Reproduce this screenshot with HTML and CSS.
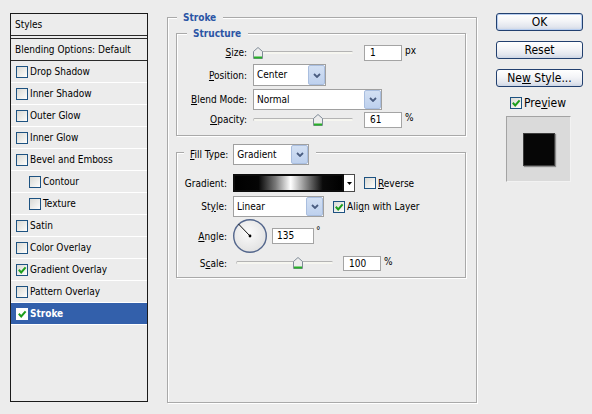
FILE: index.html
```html
<!DOCTYPE html>
<html lang="en">
<head>
<meta charset="utf-8">
<title>Layer Style</title>
<link rel="stylesheet" href="styles.css">
</head>
<body>
<div class="dialog">
  <div class="styles-list">
    <div class="list-head">Styles</div>
    <div class="list-blend">Blending Options: Default</div>
    <div class="list-item"><span class="cb"></span><span>Drop Shadow</span></div>
    <div class="list-item"><span class="cb"></span><span>Inner Shadow</span></div>
    <div class="list-item"><span class="cb"></span><span>Outer Glow</span></div>
    <div class="list-item"><span class="cb"></span><span>Inner Glow</span></div>
    <div class="list-item"><span class="cb"></span><span>Bevel and Emboss</span></div>
    <div class="list-item sub"><span class="cb"></span><span>Contour</span></div>
    <div class="list-item sub"><span class="cb"></span><span>Texture</span></div>
    <div class="list-item"><span class="cb"></span><span>Satin</span></div>
    <div class="list-item"><span class="cb"></span><span>Color Overlay</span></div>
    <div class="list-item"><span class="cb"><svg class="tick" viewBox="0 0 10 10" width="10" height="10"><path d="M1.8 4.8 L4.2 7.4 L8.6 2.4" fill="none" stroke="#1c9e1c" stroke-width="2"/></svg></span><span>Gradient Overlay</span></div>
    <div class="list-item"><span class="cb"></span><span>Pattern Overlay</span></div>
    <div class="list-item selected"><span class="cb"><svg class="tick" viewBox="0 0 10 10" width="10" height="10"><path d="M1.8 4.8 L4.2 7.4 L8.6 2.4" fill="none" stroke="#1c9e1c" stroke-width="2"/></svg></span><span>Stroke</span></div>
  </div>

  <fieldset class="group main">
    <legend>Stroke</legend>

    <fieldset class="group structure">
      <legend>Structure</legend>
      <div class="row r-size">
        <span class="lbl"><u>S</u>ize:</span>
        <div class="slider s-size">
          <div class="track"></div>
          <svg class="thumb" style="left:0px" viewBox="0 0 10 12" width="10" height="12"><path d="M0.5 4.5 L5 0.5 L9.5 4.5 V11.5 H0.5 Z" fill="#ededed" stroke="#7e8b97"/><rect x="1" y="9.5" width="8" height="2" fill="#27b027"/></svg>
        </div>
        <span class="num n-size">1</span><span class="unit">px</span>
      </div>
      <div class="row r-pos">
        <span class="lbl"><u>P</u>osition:</span>
        <div class="select sel-pos"><span class="sel-text">Center</span><span class="sel-btn"><svg viewBox="0 0 8 5" width="8" height="5"><path d="M1 1 L4 4 L7 1" fill="none" stroke="#4a5d80" stroke-width="1.8"/></svg></span></div>
      </div>
      <div class="row r-blend">
        <span class="lbl"><u>B</u>lend Mode:</span>
        <div class="select sel-blend"><span class="sel-text">Normal</span><span class="sel-btn"><svg viewBox="0 0 8 5" width="8" height="5"><path d="M1 1 L4 4 L7 1" fill="none" stroke="#4a5d80" stroke-width="1.8"/></svg></span></div>
      </div>
      <div class="row r-opac">
        <span class="lbl"><u>O</u>pacity:</span>
        <div class="slider s-size">
          <div class="track"></div>
          <svg class="thumb" style="left:60px" viewBox="0 0 10 12" width="10" height="12"><path d="M0.5 4.5 L5 0.5 L9.5 4.5 V11.5 H0.5 Z" fill="#ededed" stroke="#7e8b97"/><rect x="1" y="9.5" width="8" height="2" fill="#27b027"/></svg>
        </div>
        <span class="num n-size">61</span><span class="unit">%</span>
      </div>
    </fieldset>

    <fieldset class="group fill">
      <legend><span class="legend-lbl"><u>F</u>ill Type:</span><div class="select sel-fill"><span class="sel-text">Gradient</span><span class="sel-btn"><svg viewBox="0 0 8 5" width="8" height="5"><path d="M1 1 L4 4 L7 1" fill="none" stroke="#4a5d80" stroke-width="1.8"/></svg></span></div></legend>
      <div class="row r-grad">
        <span class="lbl">Gradient:</span>
        <div class="grad-swatch"><div class="grad-bar"></div><div class="grad-arrow"><svg viewBox="0 0 5 3" width="5" height="3"><path d="M0 0 H5 L2.5 3 Z" fill="#000"/></svg></div></div>
        <span class="cb cb-rev"></span><span class="chk-lbl"><u>R</u>everse</span>
      </div>
      <div class="row r-style">
        <span class="lbl">St<u>y</u>le:</span>
        <div class="select sel-style"><span class="sel-text">Linear</span><span class="sel-btn"><svg viewBox="0 0 8 5" width="8" height="5"><path d="M1 1 L4 4 L7 1" fill="none" stroke="#4a5d80" stroke-width="1.8"/></svg></span></div>
        <span class="cb cb-align"><svg class="tick" viewBox="0 0 10 10" width="10" height="10"><path d="M1.8 4.8 L4.2 7.4 L8.6 2.4" fill="none" stroke="#1c9e1c" stroke-width="2"/></svg></span><span class="chk-lbl">Ali<u>g</u>n with Layer</span>
      </div>
      <div class="row r-angle">
        <span class="lbl"><u>A</u>ngle:</span>
        <svg class="dial" viewBox="0 0 36 36" width="36" height="36">
          <defs><radialGradient id="dialfill" cx="0.45" cy="0.4" r="0.6"><stop offset="0" stop-color="#fbfbfb"/><stop offset="1" stop-color="#e2e2e2"/></radialGradient></defs>
          <circle cx="18" cy="18" r="16.3" fill="url(#dialfill)" stroke="#53668c" stroke-width="1.4"/>
          <line x1="6.5" y1="6" x2="18" y2="18" stroke="#111" stroke-width="1"/>
          <circle cx="18" cy="18" r="1.4" fill="#000"/>
        </svg>
        <span class="num n-angle">135</span><span class="deg">°</span>
      </div>
      <div class="row r-scale">
        <span class="lbl">S<u>c</u>ale:</span>
        <div class="slider s-scale">
          <div class="track"></div>
          <svg class="thumb" style="left:57px" viewBox="0 0 10 12" width="10" height="12"><path d="M0.5 4.5 L5 0.5 L9.5 4.5 V11.5 H0.5 Z" fill="#ededed" stroke="#7e8b97"/><rect x="1" y="9.5" width="8" height="2" fill="#27b027"/></svg>
        </div>
        <span class="num n-scale">100</span><span class="unit">%</span>
      </div>
    </fieldset>
  </fieldset>

  <div class="side">
    <button class="btn default">OK</button>
    <button class="btn">Reset</button>
    <button class="btn">Ne<u>w</u> Style...</button>
    <div class="pv-row"><span class="cb"><svg class="tick" viewBox="0 0 10 10" width="10" height="10"><path d="M1.8 4.8 L4.2 7.4 L8.6 2.4" fill="none" stroke="#1c9e1c" stroke-width="2"/></svg></span><span>Pre<u>v</u>iew</span></div>
    <div class="preview"><div class="preview-sq"></div></div>
  </div>
</div>
</body>
</html>
```

FILE: styles.css
```css
* { box-sizing: border-box; }
html, body { margin: 0; padding: 0; }
body {
  background: #ececec;
  font-family: "DejaVu Sans Condensed", "DejaVu Sans", sans-serif;
  font-stretch: condensed;
  font-size: 10px;
  color: #000;
  width: 592px;
  height: 414px;
  overflow: hidden;
}
u { text-decoration: underline; text-underline-offset: 1px; }

.dialog { display: flex; align-items: flex-start; }

/* ---------- styles list ---------- */
.styles-list {
  margin: 13px 0 0 10px;
  width: 138px;
  height: 389px;
  border: 1px solid #1a1a1a;
  display: flex;
  flex-direction: column;
}
.list-head {
  height: 22px;
  line-height: 21px;
  padding-left: 4px;
  border-bottom: 1px solid #2a2a2a;
}
.list-blend {
  margin-top: 2px;
  height: 23px;
  line-height: 21px;
  padding-left: 4px;
  border-top: 1px solid #2a2a2a;
  border-bottom: 1px solid #2a2a2a;
}
.list-item {
  height: 22px;
  display: flex;
  align-items: center;
  gap: 2px;
  padding-left: 5px;
  border-bottom: 1px solid #fff;
}
.list-item.sub { padding-left: 18px; }
.list-item.selected {
  background: #3360ab;
  color: #fff;
  font-weight: bold;
}
.list-item.selected .cb { border-color: #fff; background: #fff; }

.cb {
  flex: none;
  width: 12px;
  height: 12px;
  border: 1px solid #1d5281;
  background: linear-gradient(135deg, #d9d9d4, #f6f6f4 80%, #fff);
  display: inline-flex;
  align-items: center;
  justify-content: center;
}
.tick { display: block; }

/* ---------- group boxes ---------- */
.group {
  margin: 0;
  min-width: 0;
  border: 1px solid #a9a9a9;
  box-shadow: inset 1px 1px 0 #fff, 1px 1px 0 #fff;
}
.group > legend {
  background: #ececec;
  line-height: 13px;
  padding: 0 7px 0 6px;
  font-weight: bold;
  color: #2b55a5;
}
.main {
  margin: 11px 0 0 19px;
  width: 310px;
  height: 392px;
  padding: 3px 10px 0 8px;
}
.main > legend { margin-left: 1px; }

.structure { padding: 4px 0 7px 0; }
.structure > legend { margin-left: 10px; }

.fill { margin-top: 8px; padding: 14px 0 6px 0; }
.fill > legend {
  margin-left: 7px;
  display: flex;
  align-items: flex-start;
  gap: 5px;
  font-weight: normal;
  color: #000;
}
.fill > legend .legend-lbl { display: block; height: 16px; line-height: 21px; }
.fill > legend .select { margin-bottom: -5px; }

/* ---------- rows ---------- */
.row { display: flex; align-items: center; }
.lbl { flex: none; text-align: right; margin-right: 6px; }
.structure .lbl { width: 70px; }
.fill .lbl { width: 50px; }

.r-size { height: 17px; }
.r-pos { height: 22px; margin-top: 3px; }
.r-blend { height: 22px; margin-top: 2px; }
.r-opac { height: 17px; margin-top: 1px; }

.r-grad { height: 18px; }
.r-style { height: 21px; margin-top: 4px; }
.r-angle { height: 36px; margin-top: 1px; }
.r-scale { height: 16px; margin-top: 1px; }

/* ---------- slider ---------- */
.slider { position: relative; height: 12px; flex: none; }
.s-size { width: 100px; }
.s-scale { width: 97px; margin-left: 3px; }
.track {
  margin-top: 4px;
  height: 3px;
  border-top: 1px solid #b4b4b4;
  border-left: 1px solid #c4c4c4;
  background: #f6f6f0;
  border-radius: 2px;
}
.thumb { position: absolute; top: 0; display: block; }

/* ---------- number fields ---------- */
.num {
  flex: none;
  height: 16px;
  line-height: 14px;
  border: 1px solid #a4a4a4;
  background: #fff;
  padding-left: 5px;
}
.n-size { width: 38px; margin-left: 11px; }
.n-angle { width: 42px; margin-left: 4px; padding-left: 4px; }
.n-scale { width: 38px; height: 15px; line-height: 13px; margin-left: 10px; }
.unit { margin-left: 3px; align-self: flex-start; margin-top: 1px; }
.deg { margin-left: 2px; align-self: flex-start; margin-top: 7px; }

/* ---------- select ---------- */
.select {
  flex: none;
  display: flex;
  height: 22px;
  border: 1px solid #a0a0a0;
  background: #fff;
}
.sel-text { flex: 1; padding-left: 3px; line-height: 20px; }
.sel-btn {
  flex: none;
  width: 17px;
  margin: 0;
  border: 1px solid #a9bedf;
  border-radius: 2px;
  background: linear-gradient(#d3e0f3, #bed1ee);
  display: flex;
  align-items: center;
  justify-content: center;
}
.sel-pos { width: 73px; }
.sel-blend { width: 129px; height: 21px; }
.sel-fill { width: 76px; height: 21px; }
.sel-style { width: 91px; height: 21px; }

/* ---------- gradient swatch ---------- */
.grad-swatch { flex: none; width: 122px; height: 18px; display: flex; }
.grad-bar {
  flex: 1;
  border: 2px solid #0d0d0d;
  background: linear-gradient(90deg, #000 0%, #050505 22%, #7a7a7a 38%, #fff 52%, #8a8a8a 66%, #0a0a0a 82%, #000 100%);
}
.grad-arrow {
  flex: none;
  width: 11px;
  border: 1px solid #4a4a4a;
  border-left: none;
  background: #fff;
  display: flex;
  align-items: center;
  justify-content: center;
}
.grad-arrow svg { display: block; }
.cb-rev { margin-left: 9px; }
.cb-align { margin-left: 9px; }
.chk-lbl { margin-left: 2px; }

.dial { flex: none; display: block; margin-left: -1px; }

/* ---------- right side ---------- */
.side {
  margin: 13px 0 0 19px;
  width: 87px;
  display: flex;
  flex-direction: column;
  font-size: 12px;
}
.btn {
  height: 18px;
  padding: 0;
  border: 1px solid #22406f;
  border-radius: 3px;
  background: linear-gradient(#ffffff, #f3f4f7 45%, #e2e6ee 80%, #cdd5e4);
  font: inherit;
  font-stretch: condensed;
  color: #000;
  line-height: 16px;
  margin-top: 10px;
}
.btn.default { margin-top: 0; box-shadow: inset 0 0 0 1px #b7cdef; }
.pv-row {
  margin-top: 10px;
  height: 12px;
  display: flex;
  align-items: center;
  gap: 2px;
  padding-left: 14px;
}
.preview {
  margin: 7px 0 0 10px;
  width: 65px;
  height: 66px;
  background: #dadada;
  border-top: 1px solid #a3a3a3;
  border-left: 1px solid #a3a3a3;
  border-right: 1px solid #f2f2f2;
  border-bottom: 1px solid #f2f2f2;
  display: flex;
  align-items: center;
  justify-content: center;
}
.preview-sq {
  width: 32px;
  height: 33px;
  background: #060606;
  border: 1px solid #3c3c3c;
  box-shadow: 1px 1px 1px #8c8c8c;
}
```
